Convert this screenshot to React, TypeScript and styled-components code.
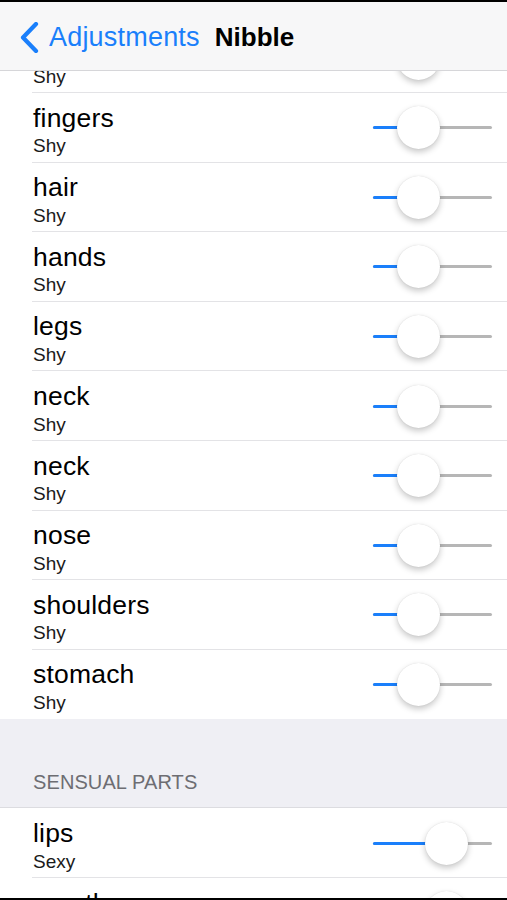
import styled, { createGlobalStyle } from 'styled-components'

const GlobalStyle = createGlobalStyle`
    html, body {
        margin: 0;
        padding: 0;
        background: #000;
    }
    body {
        font-family: "Liberation Sans", Arial, sans-serif;
        -webkit-font-smoothing: antialiased;
    }
`

const Screen = styled.div`
    width: 507px;
    height: 900px;
    display: flex;
    flex-direction: column;
    background: #000;
    padding: 2px 0;
    box-sizing: border-box;
`

const NavBar = styled.div`
    height: 69px;
    flex-shrink: 0;
    background: #f7f7f8;
    border-bottom: 1px solid #d6d6d9;
    box-sizing: border-box;
    display: flex;
    align-items: center;
    padding: 2px 0 0 19px;
    gap: 15px;
`

const BackButton = styled.div`
    display: flex;
    align-items: center;
    gap: 10px;
    color: #1a7ffb;
    font-size: 27px;
    letter-spacing: 0.2px;
`

const Title = styled.div`
    font-size: 26px;
    font-weight: bold;
    color: #000;
`

const Viewport = styled.div`
    flex: 1;
    overflow: hidden;
    background: #efeff4;
`

const Scroller = styled.div`
    margin-top: -47.6px;
`

const Group = styled.div`
    background: #fff;
`

const Row = styled.div`
    height: 69.6px;
    box-sizing: border-box;
    display: flex;
    align-items: center;
    justify-content: space-between;
    padding: 0 15px 0 33px;
    position: relative;
    &:not(:last-child)::after {
        content: '';
        position: absolute;
        left: 32px;
        right: 0;
        bottom: 0;
        height: 1px;
        background: #e3e3e6;
    }
`

const Labels = styled.div`
    align-self: flex-start;
    display: flex;
    flex-direction: column;
    padding-top: 9.7px;
`

const Name = styled.div`
    font-size: 26.5px;
    line-height: 30px;
    letter-spacing: 0.2px;
    color: #000;
`

const Sub = styled.div`
    margin-top: 2.5px;
    font-size: 19px;
    line-height: 22px;
    color: #1a1a1a;
`

const Track = styled.div`
    position: relative;
    width: 119px;
    height: 3px;
    background: #b6b6b6;
    border-radius: 2px;
`

const Fill = styled.div`
    position: absolute;
    left: 0;
    top: 0;
    bottom: 0;
    background: #1a7ffb;
    border-radius: 2px;
`

const Thumb = styled.div`
    position: absolute;
    top: 50%;
    width: 43px;
    height: 43px;
    margin: -21.5px 0 0 -21.5px;
    border-radius: 50%;
    background: #fff;
    box-shadow: 0 3px 6px rgba(0, 0, 0, 0.22), 0 0 1px rgba(0, 0, 0, 0.15);
`

const SectionHeader = styled.div`
    height: 89px;
    box-sizing: border-box;
    display: flex;
    align-items: flex-end;
    padding: 0 0 13px 33px;
    font-size: 20px;
    color: #6d6d72;
    letter-spacing: 0.1px;
    border-bottom: 1px solid #dcdce0;
`

function Slider({ value }: { value: number }) {
    const pos = 21.5 + value * (119 - 43)
    return (
        <Track>
            <Fill style={{ width: pos }} />
            <Thumb style={{ left: pos }} />
        </Track>
    )
}

const faceParts = ['ears', 'fingers', 'hair', 'hands', 'legs', 'neck', 'neck', 'nose', 'shoulders', 'stomach']
const sensualParts: [string, string, number][] = [
    ['lips', 'Sexy', 0.69],
    ['mouth', 'Sexy', 0.69],
]

export default function App() {
    return (
        <Screen>
            <GlobalStyle />
            <NavBar>
                <BackButton>
                    <svg width="20" height="31" viewBox="0 0 20 31">
                        <path d="M17 2 L4 15.5 L17 29" fill="none" stroke="#1a7ffb" strokeWidth="4.2" strokeLinecap="round" strokeLinejoin="round" />
                    </svg>
                    Adjustments
                </BackButton>
                <Title>Nibble</Title>
            </NavBar>
            <Viewport>
                <Scroller>
                    <Group>
                        {faceParts.map((name, i) => (
                            <Row key={i}>
                                <Labels>
                                    <Name>{name}</Name>
                                    <Sub>Shy</Sub>
                                </Labels>
                                <Slider value={0.32} />
                            </Row>
                        ))}
                    </Group>
                    <SectionHeader>SENSUAL PARTS</SectionHeader>
                    <Group>
                        {sensualParts.map(([name, sub, v], i) => (
                            <Row key={i}>
                                <Labels>
                                    <Name>{name}</Name>
                                    <Sub>{sub}</Sub>
                                </Labels>
                                <Slider value={v} />
                            </Row>
                        ))}
                    </Group>
                </Scroller>
            </Viewport>
        </Screen>
    )
}
